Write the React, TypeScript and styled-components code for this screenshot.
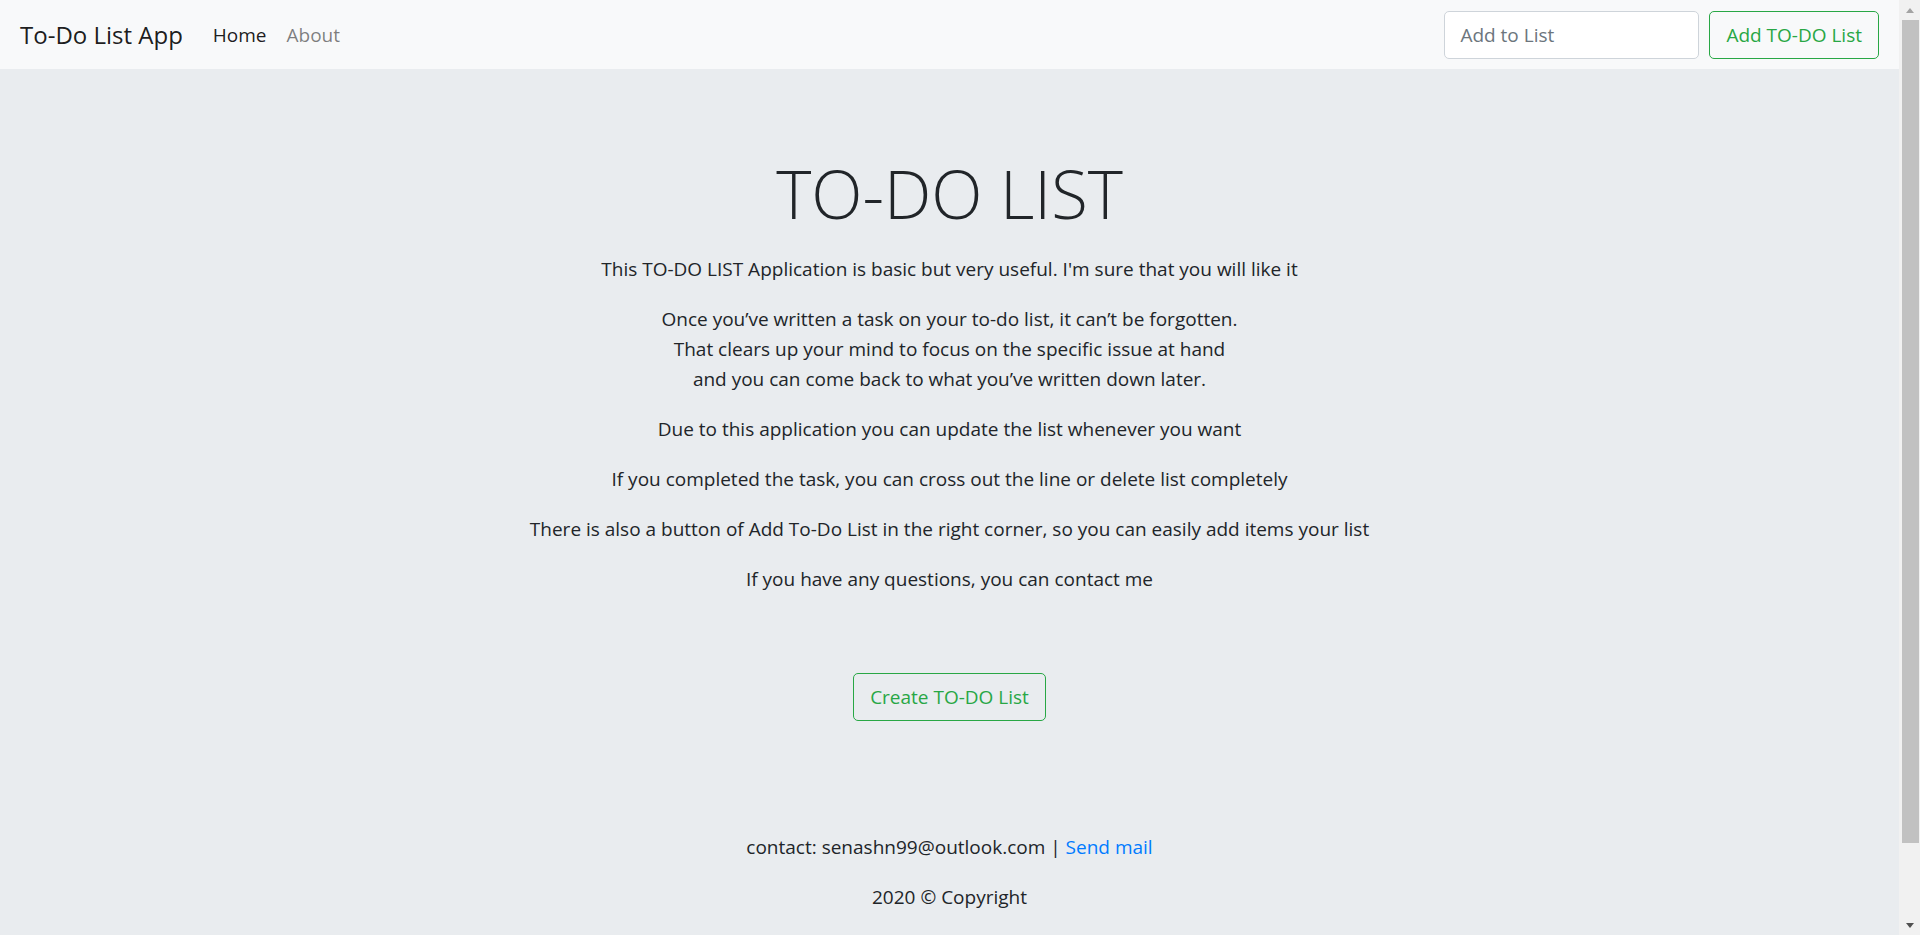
import React from 'react';
import styled, { createGlobalStyle } from 'styled-components';

const GlobalStyle = createGlobalStyle`
  html, body {
    margin: 0;
    padding: 0;
    height: 100%;
    overflow: hidden;
  }
  body {
    background: #e9ecef;
    color: #212529;
    font-family: "Segoe UI", "Open Sans", "Noto Sans", sans-serif;
    font-size: 19px;
    line-height: 30px;
  }
`;

function App() {
  return (
    <React.Fragment>
      <GlobalStyle />
      <PageWrapper>
        <MainWrapper>
          <NavbarWrapper>
            <Brand href="#">To-Do List App</Brand>
            <NavList>
              <NavItem $active>Home</NavItem>
              <NavItem>About</NavItem>
            </NavList>
            <AddForm onSubmit={(e) => e.preventDefault()}>
              <AddInput type="text" placeholder="Add to List" />
              <OutlineButton type="submit">Add TO-DO List</OutlineButton>
            </AddForm>
          </NavbarWrapper>

          <JumbotronWrapper>
            <DisplayTitle>TO-DO LIST</DisplayTitle>
            <Paragraph>
              This TO-DO LIST Application is basic but very useful. I'm sure that you will like it
            </Paragraph>
            <Paragraph>
              Once you’ve written a task on your to-do list, it can’t be forgotten.
              <br />
              That clears up your mind to focus on the specific issue at hand
              <br />
              and you can come back to what you’ve written down later.
            </Paragraph>
            <Paragraph>Due to this application you can update the list whenever you want</Paragraph>
            <Paragraph>If you completed the task, you can cross out the line or delete list completely</Paragraph>
            <Paragraph>
              There is also a button of Add To-Do List in the right corner, so you can easily add items your list
            </Paragraph>
            <Paragraph>If you have any questions, you can contact me</Paragraph>

            <CreateRow>
              <OutlineButton type="button">Create TO-DO List</OutlineButton>
            </CreateRow>

            <FooterWrapper>
              <Paragraph>
                contact: senashn99@outlook.com | <MailLink href="#">Send mail</MailLink>
              </Paragraph>
              <Paragraph>2020 © Copyright</Paragraph>
            </FooterWrapper>
          </JumbotronWrapper>
        </MainWrapper>

        <ScrollTrack>
          <ScrollArrow $dir="up" />
          <ScrollThumb />
          <ScrollArrow $dir="down" />
        </ScrollTrack>
      </PageWrapper>
    </React.Fragment>
  );
}

const PageWrapper = styled.div`
  display: flex;
  height: 100vh;
`;

const MainWrapper = styled.div`
  flex: 1;
  min-width: 0;
  display: flex;
  flex-direction: column;
`;

const NavbarWrapper = styled.nav`
  display: flex;
  align-items: center;
  height: 69px;
  padding: 0 20px;
  background: #f8f9fa;
  box-sizing: border-box;
  flex-shrink: 0;
`;

const Brand = styled.a`
  font-size: 24px;
  line-height: 37px;
  color: rgba(0, 0, 0, 0.9);
  text-decoration: none;
  margin-right: 20px;
`;

const NavList = styled.div`
  display: flex;
  flex: 1;
`;

const NavItem = styled.a<{ $active?: boolean }>`
  padding: 10px;
  color: ${(p) => (p.$active ? 'rgba(0, 0, 0, 0.9)' : 'rgba(0, 0, 0, 0.5)')};
  text-decoration: none;
  cursor: pointer;
`;

const AddForm = styled.form`
  display: flex;
  align-items: center;
  gap: 10px;
`;

const AddInput = styled.input`
  width: 255px;
  height: 48px;
  box-sizing: border-box;
  padding: 7.5px 15px;
  font: inherit;
  font-size: 19px;
  color: #495057;
  background: #fff;
  border: 1px solid #ced4da;
  border-radius: 5px;
  outline: none;

  &::placeholder {
    color: #6c757d;
  }
`;

const OutlineButton = styled.button`
  height: 48px;
  box-sizing: border-box;
  padding: 7.5px 16px;
  font: inherit;
  font-size: 19px;
  line-height: 30px;
  color: #28a745;
  background: transparent;
  border: 1px solid #28a745;
  border-radius: 5px;
  cursor: pointer;
`;

const JumbotronWrapper = styled.main`
  flex: 1;
  padding: 82px 20px 0;
  text-align: center;
  background: #e9ecef;
`;

const DisplayTitle = styled.h1`
  margin: 0 0 19px;
  font-size: 67px;
  font-weight: 300;
  line-height: 84px;
`;

const Paragraph = styled.p`
  margin: 0 0 20px;
`;

const CreateRow = styled.div`
  padding-top: 59px;
`;

const FooterWrapper = styled.footer`
  padding-top: 111px;
`;

const MailLink = styled.a`
  color: #007bff;
  text-decoration: none;
`;

const ScrollTrack = styled.div`
  width: 21px;
  flex-shrink: 0;
  display: flex;
  flex-direction: column;
  align-items: center;
  background: #f1f1f1;
`;

const ScrollThumb = styled.div`
  width: 17px;
  height: 823px;
  background: #c1c1c1;
  margin-left: 1px;
`;

const ScrollArrow = styled.div<{ $dir: 'up' | 'down' }>`
  height: 20px;
  flex-shrink: 0;
  display: flex;
  align-items: center;
  justify-content: center;
  margin-top: ${(p) => (p.$dir === 'down' ? 'auto' : '0')};

  &::before {
    content: '';
    border-left: 4.5px solid transparent;
    border-right: 4.5px solid transparent;
    ${(p) =>
      p.$dir === 'up'
        ? 'border-bottom: 5px solid #a3a3a3;'
        : 'border-top: 5px solid #505050;'}
  }
`;

export default App;
